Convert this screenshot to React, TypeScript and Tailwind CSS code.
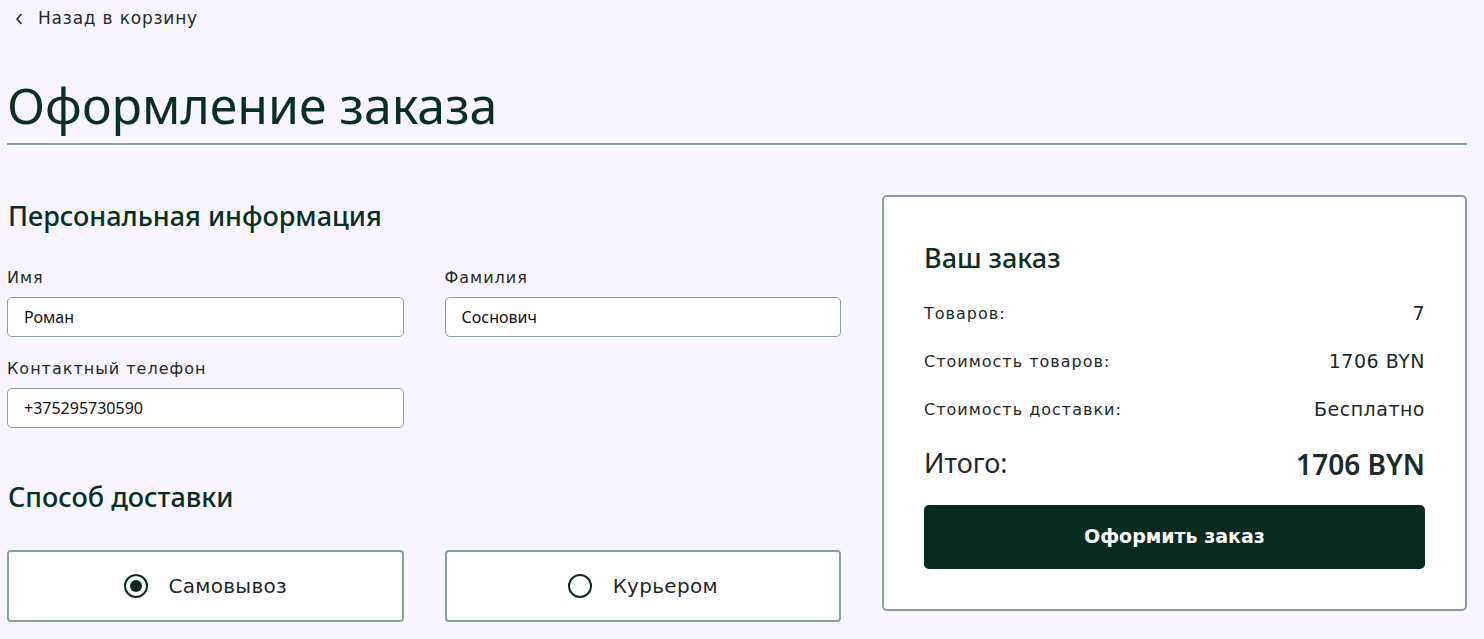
const head = "font-['Noto_Sans',sans-serif]";
const body = "font-['DejaVu_Sans',sans-serif]";

function Field({ label, value }: { label: string; value: string }) {
  return (
    <div className="flex flex-col">
      <label className={`${body} text-[16px] tracking-[1px] text-[#1d2a28] h-[20px] leading-[20px] mb-[9px]`}>{label}</label>
      <input
        defaultValue={value}
        className={`${head} h-[40px] rounded-[5px] border border-[#85a298] bg-white px-[16px] text-[16px] text-[#111] outline-none`}
      />
    </div>
  );
}

function Delivery({ label, checked }: { label: string; checked?: boolean }) {
  return (
    <button className="flex h-[72px] items-center justify-center gap-[21px] rounded-[4px] border-2 border-[#85a298] bg-white">
      <span className="flex h-[24px] w-[24px] items-center justify-center rounded-full border-2 border-[#0b2a20]">
        {checked && <span className="h-[12px] w-[12px] rounded-full bg-[#0b2a20]" />}
      </span>
      <span className={`${body} text-[20px] tracking-[0.3px] text-[#1d2a28]`}>{label}</span>
    </button>
  );
}

function Row({ label, value }: { label: string; value: string }) {
  return (
    <div className="flex items-center justify-between h-[48px]">
      <span className={`${body} text-[16px] tracking-[1px] text-[#1d2a28]`}>{label}</span>
      <span className={`${body} text-[19px] tracking-[0.5px] text-[#1d2a28]`}>{value}</span>
    </div>
  );
}

export default function App() {
  return (
    <div className="min-h-screen bg-[#f8f5fe] pl-[7px] pr-[17px]">
      <a className={`${body} flex items-center gap-[15px] pt-[6px] pl-[8px] text-[17px] tracking-[0.8px] text-[#1d2a28]`}>
        <svg width="8" height="12" viewBox="0 0 8 12" fill="none" stroke="#1d2a28" strokeWidth="1.6" strokeLinecap="round" strokeLinejoin="round">
          <path d="M6 1.5 L2 6 L6 10.5" />
        </svg>
        Назад в корзину
      </a>

      <h1 className={`${head} mt-[43px] text-[50px] leading-[60px] text-[#0a2e22]`}>Оформление заказа</h1>
      <div className="mt-[8px] h-[2px] bg-[#8aa59b]" />

      <div className="mt-[54px] flex gap-[41px]">
        <div className="w-[834px] shrink-0">
          <h2 className={`${head} pl-[1px] text-[27px] font-medium leading-[34px] text-[#0a2e22]`}>Персональная информация</h2>
          <div className="mt-[35px] grid grid-cols-2 gap-x-[41px] gap-y-[22px]">
            <Field label="Имя" value="Роман" />
            <Field label="Фамилия" value="Соснович" />
            <Field label="Контактный телефон" value="+375295730590" />
          </div>
          <h2 className={`${head} mt-[52px] pl-[1px] text-[27px] font-medium leading-[34px] text-[#0a2e22]`}>Способ доставки</h2>
          <div className="mt-[36px] grid grid-cols-2 gap-x-[41px]">
            <Delivery label="Самовывоз" checked />
            <Delivery label="Курьером" />
          </div>
        </div>

        <div className="-mt-[4px] flex-1 self-start rounded-[5px] border-2 border-[#85a298] bg-white px-[40px] pt-[44px] pb-[40px]">
          <h3 className={`${head} text-[27px] font-medium leading-[34px] text-[#0a2e22]`}>Ваш заказ</h3>
          <div className="mt-[15px]">
            <Row label="Товаров:" value="7" />
            <Row label="Стоимость товаров:" value="1706 BYN" />
            <Row label="Стоимость доставки:" value="Бесплатно" />
          </div>
          <div className="mt-[9px] flex items-center justify-between">
            <span className={`${head} text-[27px] text-[#1d2a28]`}>Итого:</span>
            <span className={`${head} text-[28px] font-semibold text-[#1d2a28]`}>1706 BYN</span>
          </div>
          <button className={`${body} mt-[20px] h-[64px] w-full rounded-[5px] bg-[#052c1f] text-[19px] font-bold text-white`}>
            Оформить заказ
          </button>
        </div>
      </div>
    </div>
  );
}
